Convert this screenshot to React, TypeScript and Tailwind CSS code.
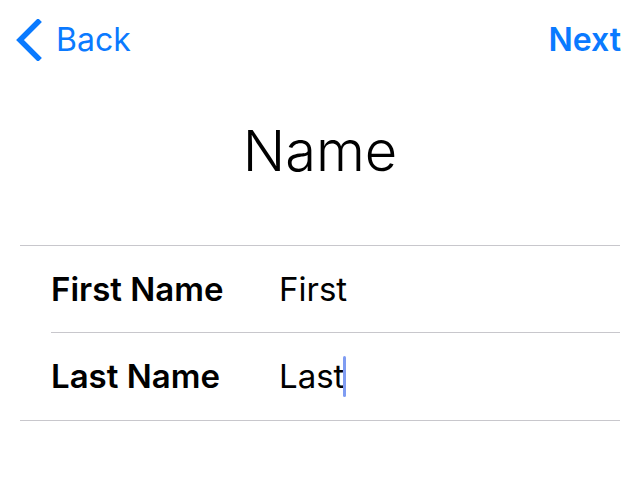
import React from 'react';

function Row({ label, value, caret, divider }: { label: string; value: string; caret?: boolean; divider?: boolean }) {
    return (
        <div className="pl-[31px]">
            <div className={`flex h-[87px] items-center ${divider ? 'border-b border-[#c8c7cc]' : ''}`}>
                <div className="w-[228px] text-[33px] font-semibold leading-none text-black">{label}</div>
                <div className="flex items-center text-[33px] leading-none text-black">
                    {value}
                    {caret && <span className="ml-[-1px] inline-block h-[41px] w-[3px] rounded-full bg-[#7f9cf2]" />}
                </div>
            </div>
        </div>
    );
}

export default function App() {
    return (
        <div className="h-[488px] w-[640px] bg-white font-['Inter',sans-serif] antialiased">
            <div className="flex h-[80px] items-center justify-between pl-[14px] pr-[19px] text-[#0a7aff]">
                <div className="flex items-center">
                    <svg width="28" height="42" viewBox="0 0 28 42">
                        <path d="M24 3 L6 21 L24 39" fill="none" stroke="#0a7aff" strokeWidth="5.5" strokeLinecap="square" />
                    </svg>
                    <span className="ml-[14px] text-[32px] leading-none">Back</span>
                </div>
                <span className="text-[32px] font-semibold leading-none">Next</span>
            </div>
            <h1 className="mt-[43px] text-center text-[56px] font-light leading-none text-black">Name</h1>
            <div className="mx-[20px] mt-[66px] border-y border-[#c8c7cc]">
                <Row label="First Name" value="First" divider />
                <Row label="Last Name" value="Last" caret />
            </div>
        </div>
    );
}
